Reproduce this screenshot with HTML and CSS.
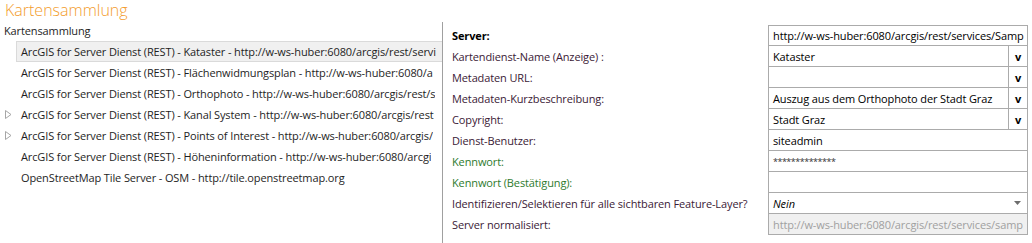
FILE: index.html
```html
<!DOCTYPE html>
<html lang="de">
<head>
  <meta charset="UTF-8">
  <title>Kartensammlung</title>
  <link rel="stylesheet" href="styles.css">
</head>
<body>
  <h1 class="title">Kartensammlung</h1>
  <div class="main">
    <div class="tree">
      <div class="tree-root">Kartensammlung</div>
      <div class="node selected"><span class="exp"></span><span class="txt">ArcGIS for Server Dienst (REST) - Kataster - http://w-ws-huber:6080/arcgis/rest/servi</span></div>
      <div class="node"><span class="exp"></span><span class="txt">ArcGIS for Server Dienst (REST) - Flächenwidmungsplan - http://w-ws-huber:6080/a</span></div>
      <div class="node"><span class="exp"></span><span class="txt">ArcGIS for Server Dienst (REST) - Orthophoto - http://w-ws-huber:6080/arcgis/rest/s</span></div>
      <div class="node"><span class="exp"><svg width="7" height="9" viewBox="0 0 7 9"><path d="M0.5 0.5 L6 4.5 L0.5 8.5 Z" fill="none" stroke="#a6a6a6"/></svg></span><span class="txt">ArcGIS for Server Dienst (REST) - Kanal System - http://w-ws-huber:6080/arcgis/rest</span></div>
      <div class="node"><span class="exp"><svg width="7" height="9" viewBox="0 0 7 9"><path d="M0.5 0.5 L6 4.5 L0.5 8.5 Z" fill="none" stroke="#a6a6a6"/></svg></span><span class="txt">ArcGIS for Server Dienst (REST) - Points of Interest - http://w-ws-huber:6080/arcgis/</span></div>
      <div class="node"><span class="exp"></span><span class="txt">ArcGIS for Server Dienst (REST) - Höheninformation - http://w-ws-huber:6080/arcgi</span></div>
      <div class="node osm"><span class="txt">OpenStreetMap Tile Server - OSM - http://tile.openstreetmap.org</span></div>
    </div>

    <div class="props">
      <div class="lbl bold">Server:</div>
      <div class="val">http://w-ws-huber:6080/arcgis/rest/services/Samp</div>

      <div class="lbl">Kartendienst-Name (Anzeige) :</div>
      <div class="val drop"><span class="vtxt">Kataster</span><span class="vbtn">v</span></div>

      <div class="lbl">Metadaten URL:</div>
      <div class="val drop"><span class="vtxt"></span><span class="vbtn">v</span></div>

      <div class="lbl">Metadaten-Kurzbeschreibung:</div>
      <div class="val drop"><span class="vtxt">Auszug aus dem Orthophoto der Stadt Graz</span><span class="vbtn">v</span></div>

      <div class="lbl">Copyright:</div>
      <div class="val drop"><span class="vtxt">Stadt Graz</span><span class="vbtn">v</span></div>

      <div class="lbl">Dienst-Benutzer:</div>
      <div class="val">siteadmin</div>

      <div class="lbl green">Kennwort:</div>
      <div class="val pwd">**************</div>

      <div class="lbl green">Kennwort (Bestätigung):</div>
      <div class="val"></div>

      <div class="lbl">Identifizieren/Selektieren für alle sichtbaren Feature-Layer?</div>
      <div class="val combo"><span class="vtxt">Nein</span><svg width="7" height="4" viewBox="0 0 7 4"><path d="M0 0 H7 L3.5 4 Z" fill="#6d6d6d"/></svg></div>

      <div class="lbl">Server normalisiert:</div>
      <div class="val readonly">http://w-ws-huber:6080/arcgis/rest/services/samp</div>
    </div>
  </div>
</body>
</html>
```

FILE: styles.css
```css
body {
  margin: 0;
  font-family: 'Open Sans', 'Noto Sans', sans-serif;
  font-size: 11px;
  letter-spacing: -0.12px;
  color: #1e1e1e;
  background: #fff;
  width: 1032px;
  height: 243px;
  overflow: hidden;
}
.title {
  margin: 0;
  padding: 0 0 0 5px;
  height: 22px;
  font-size: 16px;
  font-weight: 300;
  letter-spacing: 0;
  color: #f39c2c;
  line-height: 21px;
}
.main {
  display: flex;
  height: 221px;
}
.tree {
  width: 442px;
  border-right: 1px solid #a0a0a0;
  margin-right: 9px;
}
.tree-root {
  padding-left: 4px;
  height: 19px;
  line-height: 17px;
}
.node {
  display: flex;
  align-items: center;
  height: 21px;
  white-space: nowrap;
  overflow: hidden;
  border: 1px solid transparent;
  border-right: none;
  margin-left: 4px;
  box-sizing: border-box;
}
.node.selected {
  background: #f0f0f0;
  border-color: #dadada;
  margin-left: 16px;
}
.node.selected .exp {
  display: none;
}
.node .exp {
  width: 12px;
  flex: none;
  display: flex;
  align-items: center;
}
.node .txt {
  padding-left: 4px;
  overflow: hidden;
}
.node.osm .txt {
  padding-left: 16px;
}
.props {
  flex: 1;
  display: grid;
  grid-template-columns: 1fr 260px;
  grid-auto-rows: 21px;
  padding: 3px 4px 0 0;
  align-content: start;
}
.lbl {
  display: flex;
  align-items: center;
  color: #3b1a36;
  white-space: nowrap;
}
.lbl.bold {
  font-weight: 700;
  color: #000;
}
.lbl.green {
  color: #2e7a2e;
}
.val {
  display: flex;
  align-items: center;
  border: 1px solid #ababab;
  border-top: none;
  padding-left: 4px;
  white-space: nowrap;
  overflow: hidden;
  color: #000;
}
.val:nth-child(2) {
  border-top: 1px solid #ababab;
}
.val.drop {
  padding-left: 0;
}
.vtxt {
  flex: 1;
  padding-left: 4px;
  overflow: hidden;
}
.vbtn {
  width: 18px;
  height: 100%;
  border-left: 1px solid #ababab;
  display: flex;
  align-items: center;
  justify-content: center;
  font-weight: 700;
  font-size: 11px;
}
.val.pwd {
  font-size: 9px;
  letter-spacing: -0.5px;
  color: #333;
}
.val.combo {
  padding: 0 6px 0 0;
  font-style: italic;
}
.val.readonly {
  background: #f0f0f0;
  color: #a0a0a0;
}
```
